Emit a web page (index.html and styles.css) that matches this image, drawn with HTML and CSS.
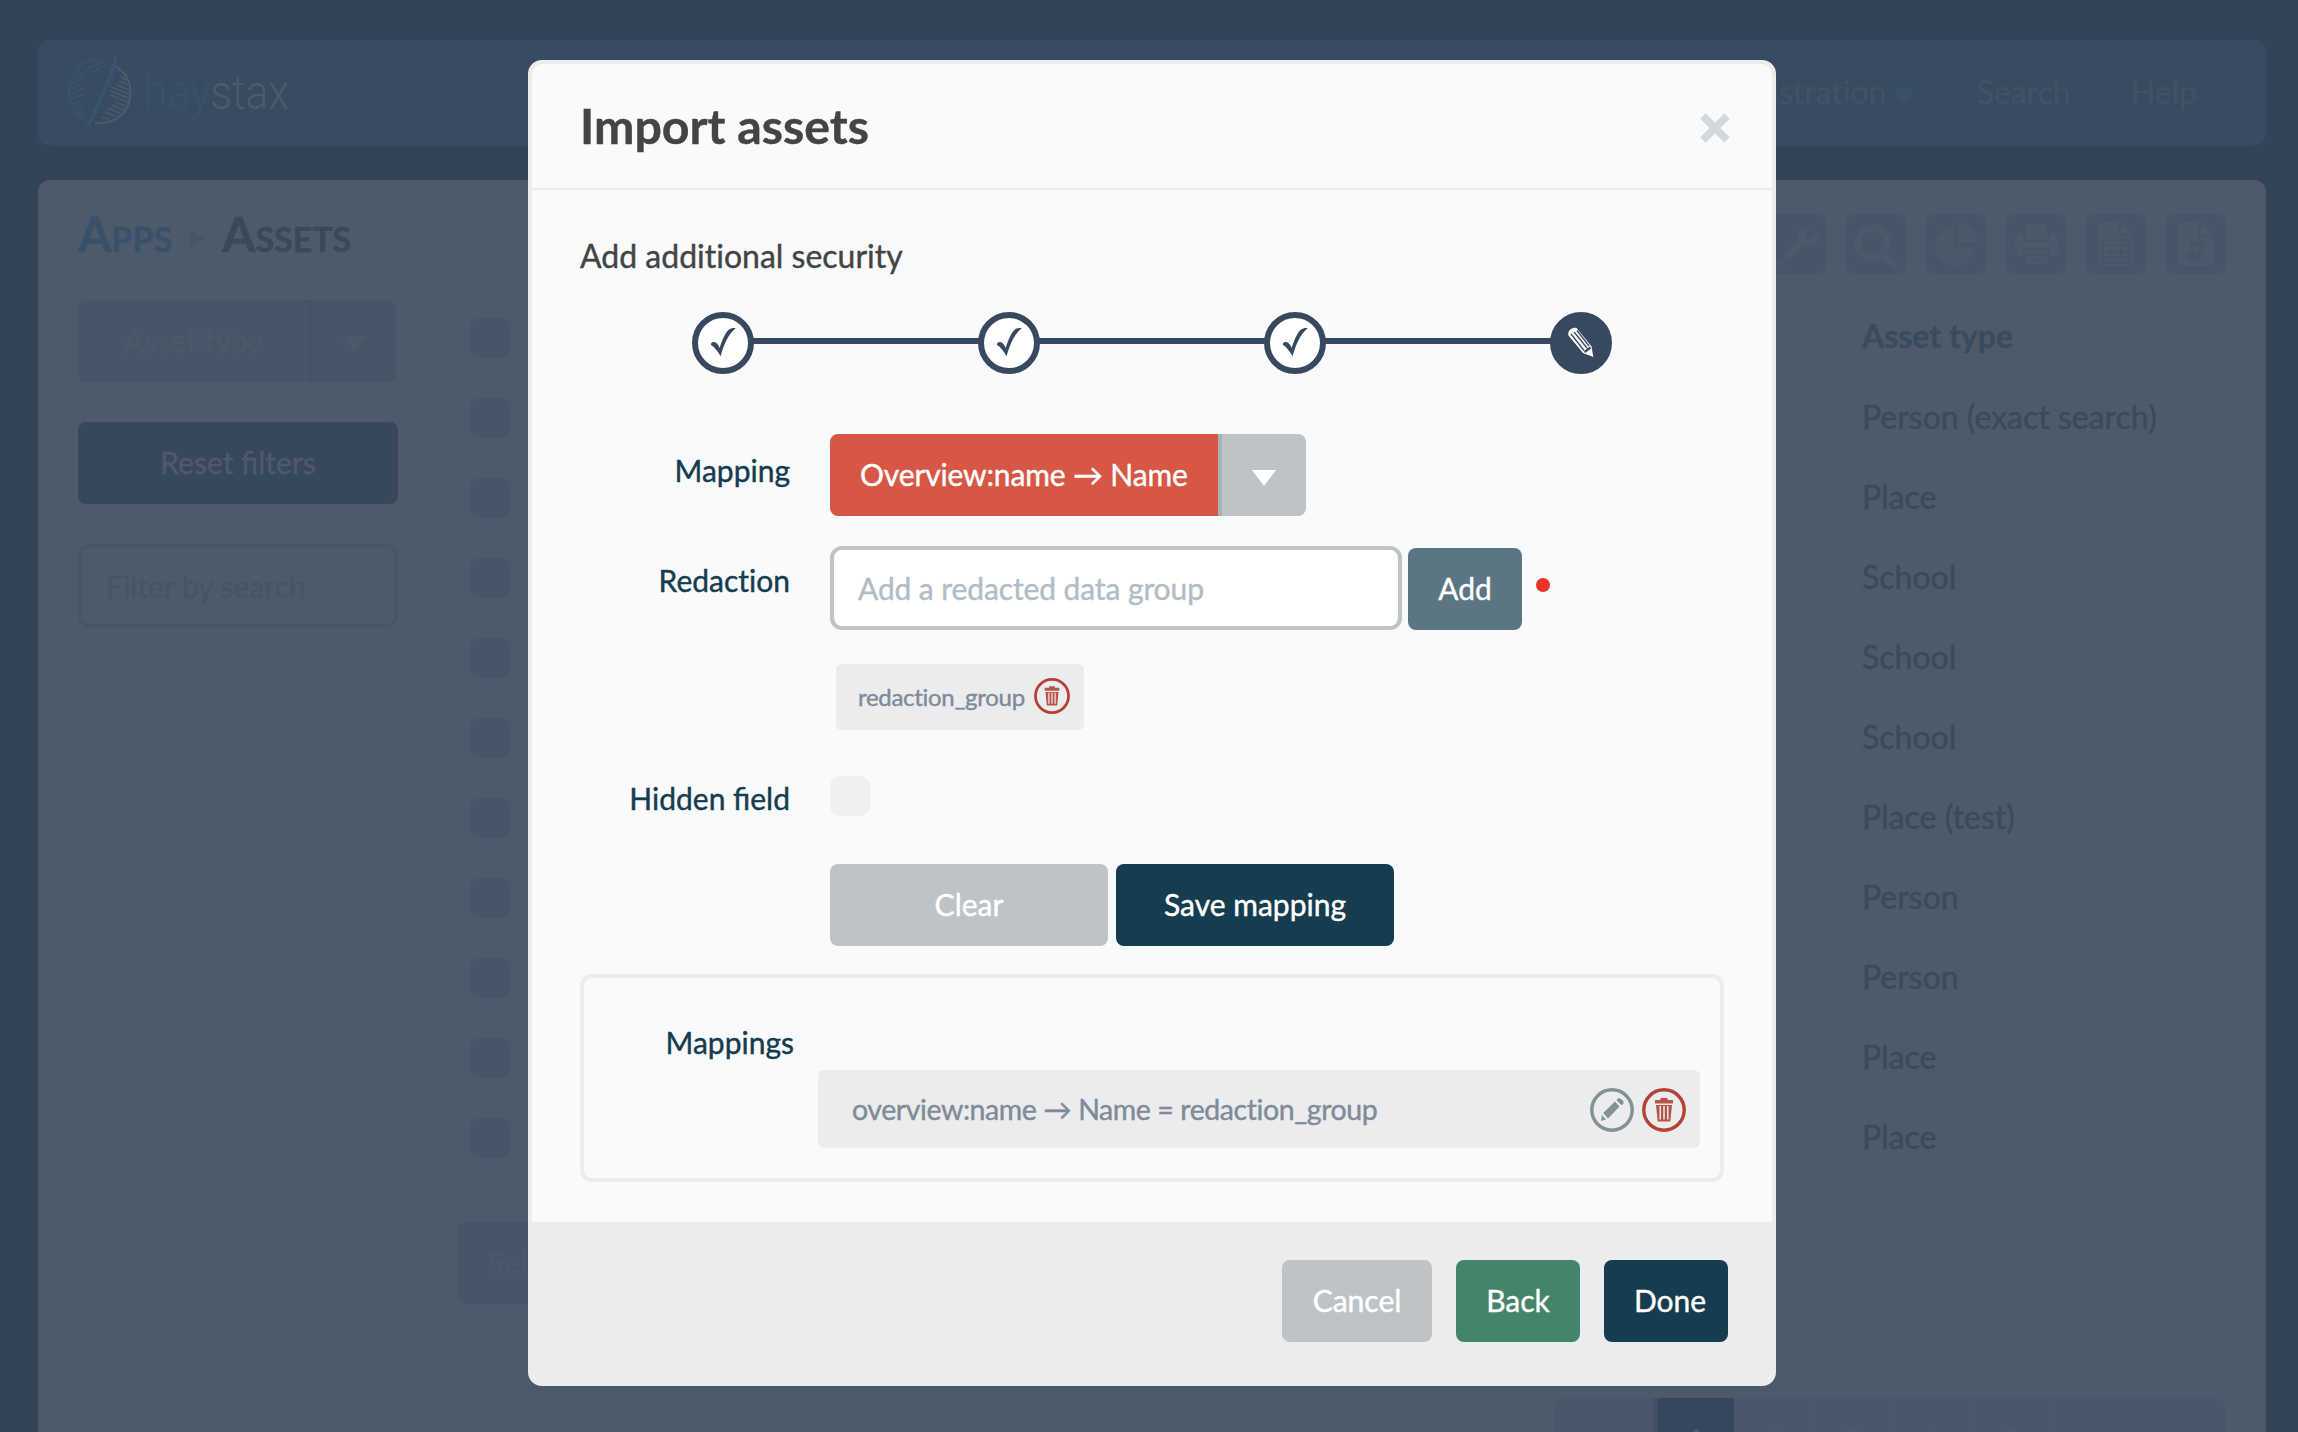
FILE: index.html
```html
<!DOCTYPE html>
<html lang="en">
<head>
<meta charset="utf-8">
<title>Import assets</title>
<link rel="stylesheet" href="styles.css">
</head>
<body>
<svg class="defs" width="0" height="0">
  <symbol id="trash" viewBox="0 0 44 44">
    <circle cx="22" cy="22" r="20.2" fill="none" stroke="#b54132" stroke-width="3.4"/>
    <path fill="#b95446" d="M18.5 10h7v2h5.5v3.6h-18V12h5.5zM14 17h16l-1.7 16.500H15.700z"/>
    <path d="M18.200 18v13.500M22 18v13.500M25.800 18v13.500" stroke="#ebecee" stroke-width="1.500"/>
  </symbol>
  <symbol id="check" viewBox="0 0 62 62">
    <path fill="#38495f" d="M19 33C18.600 31.200 20 30 21.600 30C24.500 30 26.300 32.500 27.600 36C30.500 27 33.500 20.500 37 17.600C38.600 16.200 41 15.600 43.800 16C36.500 22 32 32 28.600 44.300C25.500 39 22.500 35 19 33Z"/>
  </symbol>
</svg>

<div class="page">
  <header class="topbar">
    <svg class="logo" width="230" height="90" viewBox="0 0 230 90">
      <g fill="none">
        <path d="M36 11.500C16 10 1 24 1 44C1 60 10 70 20 74" stroke="#38536a" stroke-width="2"/>
        <path d="M42 27L45 17.500C56 22 62.500 32 62.500 44C62.500 64 47 77 27 75" stroke="#4d5a6c" stroke-width="2.300"/>
        <path d="M45 9C49 8 48 15 44 25L20 79" stroke="#38536a" stroke-width="4"/>
        <path d="M20 20l14-6M22 25l12-6M6 31l12-8M5 36l14-9M24 30l7-5M3 41l12-6M3 46l13-6M4 51l12-5M5 56l10-4M8 61l7-3M10 66l6-3" stroke="#38536a" stroke-width="2"/>
        <path d="M53 29l5 3M51 33l9 4M49 37l12 5M43 39l18 7M42 43l19 7M42 47l18 7M47 54l11 4M44 57l12 5M40 60l12 5M37 64l10 4M34 69l7 2" stroke="#4d5a6c" stroke-width="1.800"/>
      </g>
      <text class="logo-text" x="76" y="61" textLength="145" lengthAdjust="spacingAndGlyphs"><tspan fill="#38516a">hay</tspan><tspan fill="#4d5a6c">stax</tspan></text>
    </svg>
    <nav class="nav">
      <span class="nav-item noliga">Administration<i class="nav-caret"></i></span>
      <span class="nav-item">Search</span>
      <span class="nav-item">Help</span>
    </nav>
  </header>

  <main class="panel">
    <aside class="side">
      <h1 class="crumbs"><span class="crumb-link">Apps</span><i class="crumb-sep"></i><span>Assets</span></h1>
      <div class="dim-select"><span class="dim-select-label">Asset type</span><span class="dim-select-arrow"><i class="caret"></i></span></div>
      <div class="dim-reset">Reset filters</div>
      <div class="dim-input">Filter by search</div>
    </aside>
    <section class="content">
      <div class="tools">
        <span class="tool"><svg width="60" height="60"><path d="M14 46L32 27C30 18 36 11 46 13L39 20L40 25L46 25L51 18C54 28 46 35 36 32L19 50C15 53 10 49 14 46Z"/><circle cx="17" cy="46" r="2.500" fill="#465568"/></svg></span>
        <span class="tool"><svg width="60" height="60"><circle cx="26.500" cy="29" r="15" fill="none" stroke="#4c596a" stroke-width="7"/><path d="M38 41L48 51" stroke="#4c596a" stroke-width="7" stroke-linecap="round"/></svg></span>
        <span class="tool"><svg width="60" height="60"><path d="M28 13V33H48A19.500 19.500 0 1 1 28 13Z"/><path d="M32 9A19 19 0 0 1 51 29H32Z"/></svg></span>
        <span class="tool"><svg width="60" height="60"><path d="M20 10H41V25H20ZM17 19V28H44V19Q52 19 52 27V37Q52 42 44 42V34H17V42Q9 42 9 37V27Q9 19 17 19ZM20 37H41V50H20Z"/><path d="M22 41H39M22 46H39" stroke="#465568" stroke-width="2"/></svg></span>
        <span class="tool"><svg width="60" height="60"><path d="M15 8H33V23H47V50Q47 52 45 52H15Q13 52 13 50V10Q13 8 15 8ZM36 9L46 20H36Z"/><path d="M16 26H44V49H16ZM16 32H44M16 37.500H44M16 43H44M25.500 28V49M35 28V49" fill="none" stroke="#465568" stroke-width="1.800"/></svg></span>
        <span class="tool"><svg width="60" height="60"><path d="M15 8H33V23H47V50Q47 52 45 52H15Q13 52 13 50V10Q13 8 15 8ZM36 9L46 20H36Z"/><path fill="#465568" d="M24 27H32V22L41 30L32 38V33H24ZM36 39H29V34L20 42L29 49V45H36Z"/></svg></span>
      </div>
      <div class="table">
        <div class="row head"><i class="box"></i><span class="type">Asset type</span></div>
        <div class="row"><i class="box"></i><span class="type">Person (exact search)</span></div>
        <div class="row"><i class="box"></i><span class="type">Place</span></div>
        <div class="row"><i class="box"></i><span class="type">School</span></div>
        <div class="row"><i class="box"></i><span class="type">School</span></div>
        <div class="row"><i class="box"></i><span class="type">School</span></div>
        <div class="row"><i class="box"></i><span class="type">Place (test)</span></div>
        <div class="row"><i class="box"></i><span class="type">Person</span></div>
        <div class="row"><i class="box"></i><span class="type">Person</span></div>
        <div class="row"><i class="box"></i><span class="type">Place</span></div>
        <div class="row"><i class="box"></i><span class="type">Place</span></div>
      </div>
      <div class="dim-action">Select all</div>
      <div class="pager"><span class="pg wide">‹</span><span class="pg on">1</span><span class="pg">2</span><span class="pg">3</span><span class="pg">4</span><span class="pg">5</span><span class="pg">…</span><span class="pg wide">›</span></div>
    </section>
  </main>
</div>

<div class="modal" role="dialog">
  <div class="modal-head">
    <h2 class="modal-title">Import assets</h2>
    <svg class="close" width="30" height="30" viewBox="0 0 30 30"><path d="M3 3L27 27M27 3L3 27" stroke="#d4d7dc" stroke-width="7.500"/></svg>
  </div>
  <div class="modal-body">
    <p class="lead noliga">Add additional security</p>
    <div class="steps">
      <span class="step"><svg width="62" height="62"><use href="#check"/></svg></span><i class="link"></i>
      <span class="step"><svg width="62" height="62"><use href="#check"/></svg></span><i class="link"></i>
      <span class="step"><svg width="62" height="62"><use href="#check"/></svg></span><i class="link"></i>
      <span class="step current"><svg width="62" height="62"><path fill="#fff" d="M18.500 23.500C17 19 22 14.500 26.500 16L41.500 34.500L43.300 45L33 41Z"/><path d="M21 22L34 38.500M24 20L37 36M27 18.500L39 34" stroke="#38495f" stroke-width="1.300"/><path d="M34.500 40L40.500 35.500" stroke="#38495f" stroke-width="2.200"/></svg></span>
    </div>

    <div class="field mapping">
      <label class="label">Mapping</label>
      <div class="select"><span class="select-value">Overview:name → Name</span><span class="select-arrow"><i class="caret"></i></span></div>
    </div>
    <div class="field redaction">
      <label class="label noliga">Redaction</label>
      <div class="input">Add a redacted data group</div>
      <div class="btn add">Add</div>
      <i class="dot"></i>
    </div>
    <div class="chip noliga">redaction_group<svg width="36" height="36"><use href="#trash"/></svg></div>
    <div class="field hidden-field">
      <label class="label">Hidden field</label>
      <i class="checkbox"></i>
    </div>
    <div class="actions">
      <div class="btn grey half">Clear</div>
      <div class="btn navy half">Save mapping</div>
    </div>
    <div class="mappings">
      <div class="mappings-label">Mappings</div>
      <div class="mapping-row"><span class="mapping-text noliga">overview:name → Name = redaction_group</span>
        <svg width="44" height="44"><circle cx="22" cy="22" r="20.200" fill="none" stroke="#839190" stroke-width="3.400"/><path fill="#839190" d="M11 33L12 27L16 31.500ZM13.200 25L25 13.500L29.500 18.500L18 30.500ZM26.500 12L28 10.500C30 9 34.500 13 33.500 15.500L31.500 17.300Z"/></svg>
        <svg width="44" height="44"><use href="#trash"/></svg>
      </div>
    </div>
  </div>
  <div class="modal-foot">
    <div class="btn grey cancel">Cancel</div>
    <div class="btn green back">Back</div>
    <div class="btn navy done">Done</div>
  </div>
</div>
</body>
</html>
```
FILE: styles.css
```css
* { box-sizing: border-box; }
html, body { height: 100%; }
body { margin: 0; overflow: hidden; background: #334457; font-family: Lato, sans-serif; font-size: 30px; -webkit-text-stroke: .4px currentColor; }
i { display: block; font-style: normal; flex: none; }
svg { flex: none; display: block; }
.defs { position: absolute; }
.noliga { font-variant-ligatures: none; }

/* dimmed page */
.page { padding: 40px 32px 0 38px; height: 1432px; overflow: hidden; }
.topbar { height: 106px; border-radius: 12px; background: #384b60; display: flex; justify-content: space-between; padding: 8px 69px 0 30px; }
.logo-text { font: 300 48px Roboto, sans-serif; -webkit-text-stroke: 0; }
.nav { display: flex; gap: 60px; height: 88px; font-size: 32px; line-height: 88px; color: #445164; }
.nav-item { display: flex; align-items: center; height: 88px; }
.nav-caret { width: 0; margin-left: 6px; margin-top: 7px; border: 12px solid transparent; border-top: 16px solid #38506a; border-bottom: 0; }

.panel { margin-top: 34px; height: 1300px; border-radius: 12px; background: #4d5a6a; display: flex; padding: 34px 40px 0; color: #3a4a5c; }
.side { width: 320px; }
.crumbs { margin: 0; height: 86px; display: flex; font-size: 48px; font-variant: small-caps; line-height: 40px; color: #3a4858; white-space: nowrap; }
.crumb-link { color: #38506a; }
.crumb-sep { margin: 16px 17px 0 18px; width: 15px; border: 9px solid transparent; border-left: 15px solid #44566a; border-right: 0; height: 18px; }
.caret { width: 0; border: 12px solid transparent; border-top: 16px solid #fff; border-bottom: 0; }
.dim-select { display: flex; width: 318px; height: 82px; line-height: 81px; border-radius: 8px; background: #465568; color: #4b596a; }
.dim-select-label { width: 230px; padding-left: 46px; }
.dim-select-arrow { flex: 1; border-left: 4px solid #435265; padding: 36px 0 0 30px; }
.dim-select .caret { border-top-color: #4b596a; }
.dim-reset { margin-top: 40px; height: 82px; line-height: 80px; border-radius: 8px; background: #37485d; color: #4d5a6c; text-align: center; }
.dim-input { margin-top: 40px; height: 84px; line-height: 76px; border: 4px solid #465667; border-radius: 12px; padding-left: 24px; color: #455567; }
.content { margin-left: 60px; width: 1768px; }
.tools { display: flex; justify-content: flex-end; gap: 20px; height: 84px; }
.tool { width: 60px; height: 60px; border-radius: 9px; background: #465568; fill: #4c596a; }
.table { font-size: 32px; }
.row { height: 80px; border-bottom: 3px solid #4a5868; display: flex; align-items: center; line-height: 76px; }
.row:nth-child(odd) { background: #4c5a6b; }
.row.head { background: none; font-weight: 700; color: #394b5f; }
.row.head .type { margin-top: -2px; }
.row:last-child { border-bottom-color: transparent; }
.box { width: 40px; height: 40px; margin: 3px 0 0 12px; border-radius: 10px; background: #465568; }
.type { margin-left: 1352px; }
.dim-action { margin-top: 44px; width: 200px; height: 82px; line-height: 81px; padding-left: 30px; border-radius: 8px; background: #465568; color: #4b596a; }
.pager { margin: 94px 0 0 auto; width: 672px; height: 82px; border-radius: 10px; overflow: hidden; background: #48576a; color: #4d5a6a; display: flex; text-align: center; line-height: 82px; }
.pg { flex: 1; border-left: 2px solid #49586a; }
.pg.wide { flex: none; width: 100px; border: 0; }
.pg.on { background: #35475c; border-left: 4px solid #405064; }

/* dialog */
.modal { position: absolute; left: 528px; top: 60px; width: 1248px; height: 1326px; border: 4px solid #ebecee; border-radius: 14px; background: #f9fafc; overflow: hidden; }
.modal-head { height: 126px; border-bottom: 2px solid #ebecee; display: flex; justify-content: space-between; align-items: center; padding: 0 42px 0 48px; }
.modal-title { margin: -2px 0 0; font-size: 48.3px; color: #444; }
.close { margin-top: 3px; }
.modal-body { height: 1032px; padding: 46px 48px 0; }
.lead { margin: 0; font-size: 32px; line-height: 40px; color: #444; }
.steps { margin: 36px auto 60px; width: 920px; display: flex; align-items: center; }
.step { width: 62px; height: 62px; border-radius: 50%; background: #fff; border: 6px solid #38495f; }
.step svg { margin: -6px; }
.step.current { background: #38495f; }
.link { flex: 1; height: 6px; background: #38495f; margin: -4px -1px 0; }
.field { display: flex; }
.label { width: 210px; margin-right: 40px; text-align: right; color: #163c4f; line-height: 72px; }
.select { display: flex; height: 82px; line-height: 81px; border-radius: 8px; overflow: hidden; color: #fff; }
.select-value { width: 388px; padding-left: 30px; background: #d65745; white-space: nowrap; letter-spacing: -.15px; }
.select-arrow { width: 88px; background: #bdc3c7; border-left: 4px solid #a9b2b7; padding: 36px 0 0 30px; }
.redaction { margin-top: 30px; height: 84px; }
.redaction .label { line-height: 68px; }
.input { width: 572px; height: 84px; line-height: 76px; border: 4px solid #bdc3c7; border-radius: 12px; background: #fff; padding-left: 24px; color: #b2bcc5; letter-spacing: -.1px; }
.btn { height: 82px; line-height: 81px; border-radius: 8px; color: #fff; text-align: center; }
.add { margin: 2px 0 0 6px; width: 114px; background: #5b7682; }
.dot { width: 14px; height: 14px; border-radius: 50%; background: #eb3223; margin: 32px 0 0 14px; }
.chip { margin: 34px 0 0 256px; width: 248px; height: 66px; line-height: 66px; border-radius: 6px; background: #ebecee; color: #7f8b98; font-size: 24px; letter-spacing: -.3px; padding: 0 14px 0 22px; display: flex; justify-content: space-between; align-items: center; }
.chip svg { margin-top: -2px; }
.hidden-field { margin-top: 46px; height: 40px; }
.hidden-field .label { line-height: 45px; }
.checkbox { width: 40px; height: 40px; border-radius: 10px; background: #eff0f2; }
.actions { margin: 48px 0 0 250px; display: flex; gap: 8px; }
.half { width: 278px; }
.grey { background: #bdc3c7; }
.navy { background: #163c4f; }
.green { background: #44846b; }
.mappings { margin-top: 28px; height: 208px; border: 4px solid #ebecee; border-radius: 12px; padding: 44px 20px 0 0; }
.mappings-label { width: 210px; line-height: 40px; margin-bottom: 8px; text-align: right; color: #163c4f; }
.mapping-row { margin-left: 234px; height: 78px; border-radius: 6px; background: #ebecee; display: flex; align-items: center; gap: 8px; padding: 1px 14px 0 34px; color: #7f8b98; font-size: 28.5px; }
.mapping-text { flex: 1; letter-spacing: -.43px; margin-top: -1px; }
.modal-foot { height: 160px; background: #ebecee; display: flex; justify-content: flex-end; gap: 24px; padding: 38px 44px 0; border-radius: 0 0 12px 12px; }
.cancel { width: 150px; }
.back, .done { width: 124px; }
.done { padding-left: 8px; }
```
